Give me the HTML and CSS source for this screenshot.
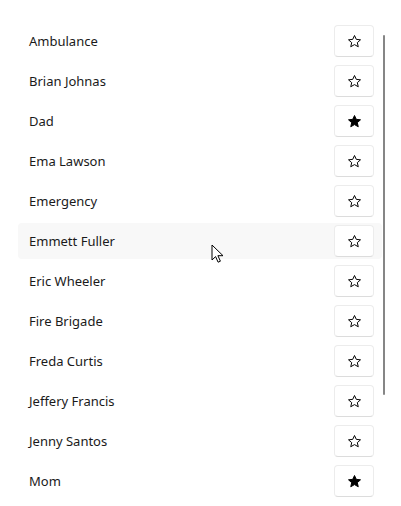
FILE: index.html
```html
<!DOCTYPE html>
<html>
<head>
<meta charset="utf-8">
<link rel="stylesheet" href="styles.css">
</head>
<body>
<div class="page">
  <ul class="list">
    <li class="row"><span class="name">Ambulance</span><button class="fav"><svg viewBox="0 0 16 16" class="star"><path d="M8 1.6l1.9 4.1 4.5.5-3.4 3 1 4.4L8 11.3 4 13.6l1-4.4-3.4-3 4.5-.5z" fill="none" stroke="#000" stroke-width="1.05" stroke-linejoin="round"/></svg></button></li>
    <li class="row"><span class="name">Brian Johnas</span><button class="fav"><svg viewBox="0 0 16 16" class="star"><path d="M8 1.6l1.9 4.1 4.5.5-3.4 3 1 4.4L8 11.3 4 13.6l1-4.4-3.4-3 4.5-.5z" fill="none" stroke="#000" stroke-width="1.05" stroke-linejoin="round"/></svg></button></li>
    <li class="row"><span class="name">Dad</span><button class="fav"><svg viewBox="0 0 16 16" class="star"><path d="M8 1.6l1.9 4.1 4.5.5-3.4 3 1 4.4L8 11.3 4 13.6l1-4.4-3.4-3 4.5-.5z" fill="#000" stroke="#000" stroke-width="1.05" stroke-linejoin="round"/></svg></button></li>
    <li class="row"><span class="name">Ema Lawson</span><button class="fav"><svg viewBox="0 0 16 16" class="star"><path d="M8 1.6l1.9 4.1 4.5.5-3.4 3 1 4.4L8 11.3 4 13.6l1-4.4-3.4-3 4.5-.5z" fill="none" stroke="#000" stroke-width="1.05" stroke-linejoin="round"/></svg></button></li>
    <li class="row"><span class="name">Emergency</span><button class="fav"><svg viewBox="0 0 16 16" class="star"><path d="M8 1.6l1.9 4.1 4.5.5-3.4 3 1 4.4L8 11.3 4 13.6l1-4.4-3.4-3 4.5-.5z" fill="none" stroke="#000" stroke-width="1.05" stroke-linejoin="round"/></svg></button></li>
    <li class="row hover"><span class="name">Emmett Fuller</span><button class="fav"><svg viewBox="0 0 16 16" class="star"><path d="M8 1.6l1.9 4.1 4.5.5-3.4 3 1 4.4L8 11.3 4 13.6l1-4.4-3.4-3 4.5-.5z" fill="none" stroke="#000" stroke-width="1.05" stroke-linejoin="round"/></svg></button></li>
    <li class="row"><span class="name">Eric Wheeler</span><button class="fav"><svg viewBox="0 0 16 16" class="star"><path d="M8 1.6l1.9 4.1 4.5.5-3.4 3 1 4.4L8 11.3 4 13.6l1-4.4-3.4-3 4.5-.5z" fill="none" stroke="#000" stroke-width="1.05" stroke-linejoin="round"/></svg></button></li>
    <li class="row"><span class="name">Fire Brigade</span><button class="fav"><svg viewBox="0 0 16 16" class="star"><path d="M8 1.6l1.9 4.1 4.5.5-3.4 3 1 4.4L8 11.3 4 13.6l1-4.4-3.4-3 4.5-.5z" fill="none" stroke="#000" stroke-width="1.05" stroke-linejoin="round"/></svg></button></li>
    <li class="row"><span class="name">Freda Curtis</span><button class="fav"><svg viewBox="0 0 16 16" class="star"><path d="M8 1.6l1.9 4.1 4.5.5-3.4 3 1 4.4L8 11.3 4 13.6l1-4.4-3.4-3 4.5-.5z" fill="none" stroke="#000" stroke-width="1.05" stroke-linejoin="round"/></svg></button></li>
    <li class="row"><span class="name">Jeffery Francis</span><button class="fav"><svg viewBox="0 0 16 16" class="star"><path d="M8 1.6l1.9 4.1 4.5.5-3.4 3 1 4.4L8 11.3 4 13.6l1-4.4-3.4-3 4.5-.5z" fill="none" stroke="#000" stroke-width="1.05" stroke-linejoin="round"/></svg></button></li>
    <li class="row"><span class="name">Jenny Santos</span><button class="fav"><svg viewBox="0 0 16 16" class="star"><path d="M8 1.6l1.9 4.1 4.5.5-3.4 3 1 4.4L8 11.3 4 13.6l1-4.4-3.4-3 4.5-.5z" fill="none" stroke="#000" stroke-width="1.05" stroke-linejoin="round"/></svg></button></li>
    <li class="row"><span class="name">Mom</span><button class="fav"><svg viewBox="0 0 16 16" class="star"><path d="M8 1.6l1.9 4.1 4.5.5-3.4 3 1 4.4L8 11.3 4 13.6l1-4.4-3.4-3 4.5-.5z" fill="#000" stroke="#000" stroke-width="1.05" stroke-linejoin="round"/></svg></button></li>
  </ul>
  <div class="scrollbar"></div>
  <svg class="cursor" viewBox="0 0 13 20" width="13" height="20"><path d="M1 1v15l3.6-3.4 2.5 5.6 2.3-1-2.5-5.5H12z" fill="#fff" stroke="#000" stroke-width="1" stroke-linejoin="round"/></svg>
</div>
</body>
</html>
```
FILE: styles.css
```css
html, body {
  margin: 0;
  padding: 0;
  background: #fff;
}
.page {
  position: relative;
  width: 401px;
  height: 506px;
  overflow: hidden;
  font-family: "Noto Sans", "Open Sans", sans-serif;
  font-size: 13px;
  color: #1a1a1a;
}
.list {
  list-style: none;
  margin: 0;
  padding: 23px 19px 0 18px;
  display: flex;
  flex-direction: column;
  gap: 4px;
}
.row {
  height: 36px;
  display: flex;
  align-items: center;
  justify-content: space-between;
  padding: 0 8px 0 11px;
  border-radius: 4px;
}
.row.hover {
  background: #f8f8f8;
}
.name {
  line-height: 20px;
}
.fav {
  width: 40px;
  height: 32px;
  padding: 0;
  display: flex;
  align-items: center;
  justify-content: center;
  background: #fff;
  border: 1px solid #ececec;
  border-bottom-color: #dcdcdc;
  border-radius: 4px;
}
.star {
  width: 15px;
  height: 15px;
  display: block;
}
.scrollbar {
  position: absolute;
  left: 383px;
  top: 35px;
  width: 2px;
  height: 360px;
  background: #868686;
  border-radius: 1px;
}
.cursor {
  position: absolute;
  left: 211px;
  top: 244px;
}
```
